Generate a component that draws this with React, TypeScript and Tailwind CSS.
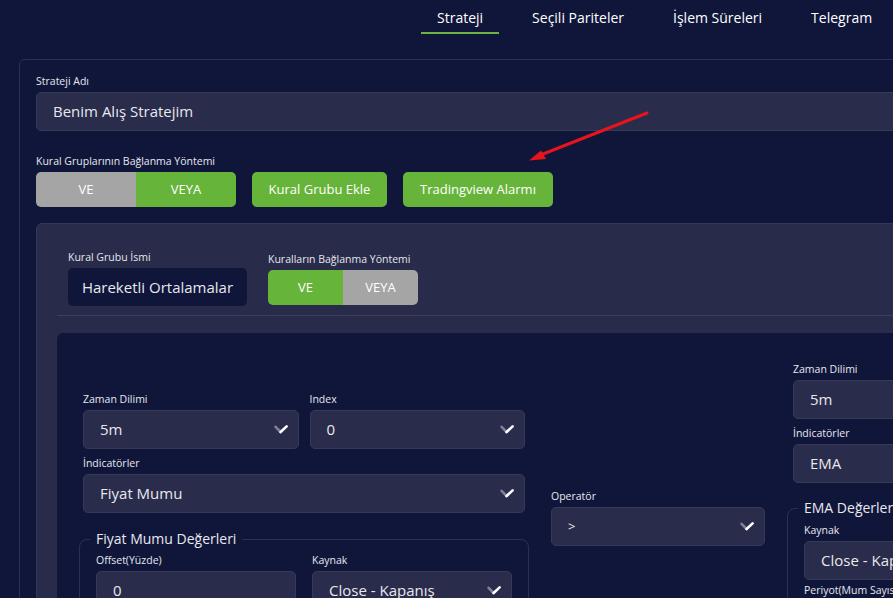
import React from "react";

const Chevron = () => (
  <svg width="14" height="9" viewBox="0 0 14 9" className="shrink-0">
    <path d="M1.6 1.8 L6.6 7" stroke="#7d8199" strokeWidth="2.6" strokeLinecap="round" fill="none" />
    <path d="M6.6 7 L12.6 1.4" stroke="#ffffff" strokeWidth="2.6" strokeLinecap="round" fill="none" />
  </svg>
);

const Label = ({ children }: { children: React.ReactNode }) => (
  <div className="text-[10.5px] leading-[14px] text-[#e6e7ee] mb-1 whitespace-nowrap">{children}</div>
);

const Select = ({ value, small }: { value: string; small?: boolean }) => (
  <div className="h-[39px] bg-[#292c4a] border border-[#363a58] rounded-[5px] pl-4 pr-[10px] flex items-center justify-between">
    <span className={small ? "text-[13px] text-[#e8e8ee]" : "text-[15px] text-[#e8e8ee] whitespace-nowrap"}>{value}</span>
    <Chevron />
  </div>
);

const Input = ({ value }: { value: string }) => (
  <div className="h-[39px] bg-[#292c4a] border border-[#363a58] rounded-[5px] pl-4 flex items-center text-[15px] text-[#e8e8ee]">
    {value}
  </div>
);

const Field = ({ label, children }: { label: string; children: React.ReactNode }) => (
  <div>
    <Label>{label}</Label>
    {children}
  </div>
);

export default function App() {
  const navItems = ["Strateji", "Seçili Pariteler", "İşlem Süreleri", "Telegram"];
  return (
    <div className="relative w-[893px] h-[598px] overflow-hidden bg-[#10163a] text-white font-['Open_Sans',sans-serif]">
      <nav className="flex pl-[421px] gap-[17px] h-[34px]">
        {navItems.map((n, i) => (
          <div
            key={n}
            className={
              "px-4 pt-[9px] text-[14px] leading-[18px] whitespace-nowrap border-b-2 " +
              (i === 0 ? "border-[#6db33f]" : "border-transparent")
            }
          >
            {n}
          </div>
        ))}
      </nav>

      <div className="mt-[25px] ml-[19px] w-[1300px] border border-[#2b3050] rounded-[6px] px-4 pt-[14px] pb-10">
        <Label>Strateji Adı</Label>
        <div className="h-[39px] bg-[#292c4a] border border-[#363a58] rounded-[5px] pl-4 flex items-center text-[15px] text-[#e8e8ee]">
          Benim Alış Stratejim
        </div>

        <div className="mt-[23px]">
          <Label>Kural Gruplarının Bağlanma Yöntemi</Label>
          <div className="flex gap-4">
            <div className="flex w-[200px] h-[35px] rounded-[5px] overflow-hidden text-[13px]">
              <div className="w-[100px] bg-[#a5a5a5] flex items-center justify-center">VE</div>
              <div className="w-[100px] bg-[#67b43b] flex items-center justify-center">VEYA</div>
            </div>
            <div className="w-[135px] h-[35px] rounded-[5px] bg-[#67b43b] flex items-center justify-center text-[13px] whitespace-nowrap">
              Kural Grubu Ekle
            </div>
            <div className="w-[150px] h-[35px] rounded-[5px] bg-[#67b43b] flex items-center justify-center text-[13px] whitespace-nowrap">
              Tradingview Alarmı
            </div>
          </div>
        </div>

        <div className="mt-4 border border-[#33385a] rounded-[6px] bg-[#282b4a] px-5 pb-10">
          <div className="flex items-end gap-[21px] px-[11px] pt-[26px]">
            <div>
              <Label>Kural Grubu İsmi</Label>
              <div className="w-[179px] h-[38px] bg-[#10163a] rounded-[5px] flex items-center justify-center text-[15px] text-[#e8e8ee] whitespace-nowrap">
                Hareketli Ortalamalar
              </div>
            </div>
            <div>
              <Label>Kuralların Bağlanma Yöntemi</Label>
              <div className="flex w-[150px] h-[35px] rounded-[5px] overflow-hidden text-[13px] mb-px">
                <div className="w-[75px] bg-[#67b43b] flex items-center justify-center">VE</div>
                <div className="w-[75px] bg-[#a5a5a5] flex items-center justify-center">VEYA</div>
              </div>
            </div>
          </div>
          <div className="mt-[9px] h-px bg-[#3c405f]" />

          <div className="mt-[17px] rounded-[6px] bg-[#10163a] pl-[22px] pt-[29px] pb-10 flex items-start">
            <div className="mt-[30px] w-[450px] shrink-0">
              <div className="px-1 grid grid-cols-2 gap-x-[11px]">
                <Field label="Zaman Dilimi"><Select value="5m" /></Field>
                <Field label="Index"><Select value="0" /></Field>
              </div>
              <div className="px-1 mt-[7px]">
                <Field label="İndicatörler"><Select value="Fiyat Mumu" /></Field>
              </div>
              <fieldset className="mt-[17px] border border-[#2b3051] rounded-[8px] px-4 pt-[5px] pb-4">
                <legend className="ml-[-6px] px-[6px] text-[14px] leading-[18px] text-[#e8e8ee]">Fiyat Mumu Değerleri</legend>
                <div className="grid grid-cols-2 gap-4">
                  <Field label="Offset(Yüzde)"><Input value="0" /></Field>
                  <Field label="Kaynak"><Select value="Close - Kapanış" /></Field>
                </div>
              </fieldset>
            </div>

            <div className="ml-[22px] mt-[127px] w-[214px] shrink-0">
              <Field label="Operatör"><Select value=">" small /></Field>
            </div>

            <div className="ml-[22px] w-[450px] shrink-0">
              <div className="px-1.5">
                <Field label="Zaman Dilimi"><Select value="5m" /></Field>
              </div>
              <div className="px-1.5 mt-[7px]">
                <Field label="İndicatörler"><Select value="EMA" /></Field>
              </div>
              <fieldset className="mt-[16px] border border-[#2b3051] rounded-[8px] px-4 pt-[6px] pb-4">
                <legend className="ml-[-6px] px-[6px] text-[14px] leading-[18px] text-[#e8e8ee]">EMA Değerleri</legend>
                <Field label="Kaynak"><Select value="Close - Kapanış" /></Field>
                <div className="mt-[3px]">
                  <Field label="Periyot(Mum Sayısı)"><Input value="20" /></Field>
                </div>
              </fieldset>
            </div>
          </div>
        </div>
      </div>

      <svg className="absolute left-0 top-0 pointer-events-none" width="893" height="598">
        <line x1="647" y1="113" x2="538" y2="156" stroke="#e8141c" strokeWidth="3" strokeLinecap="round" />
        <polygon points="529,160.5 541,150.5 546,159" fill="#e8141c" />
      </svg>
    </div>
  );
}
